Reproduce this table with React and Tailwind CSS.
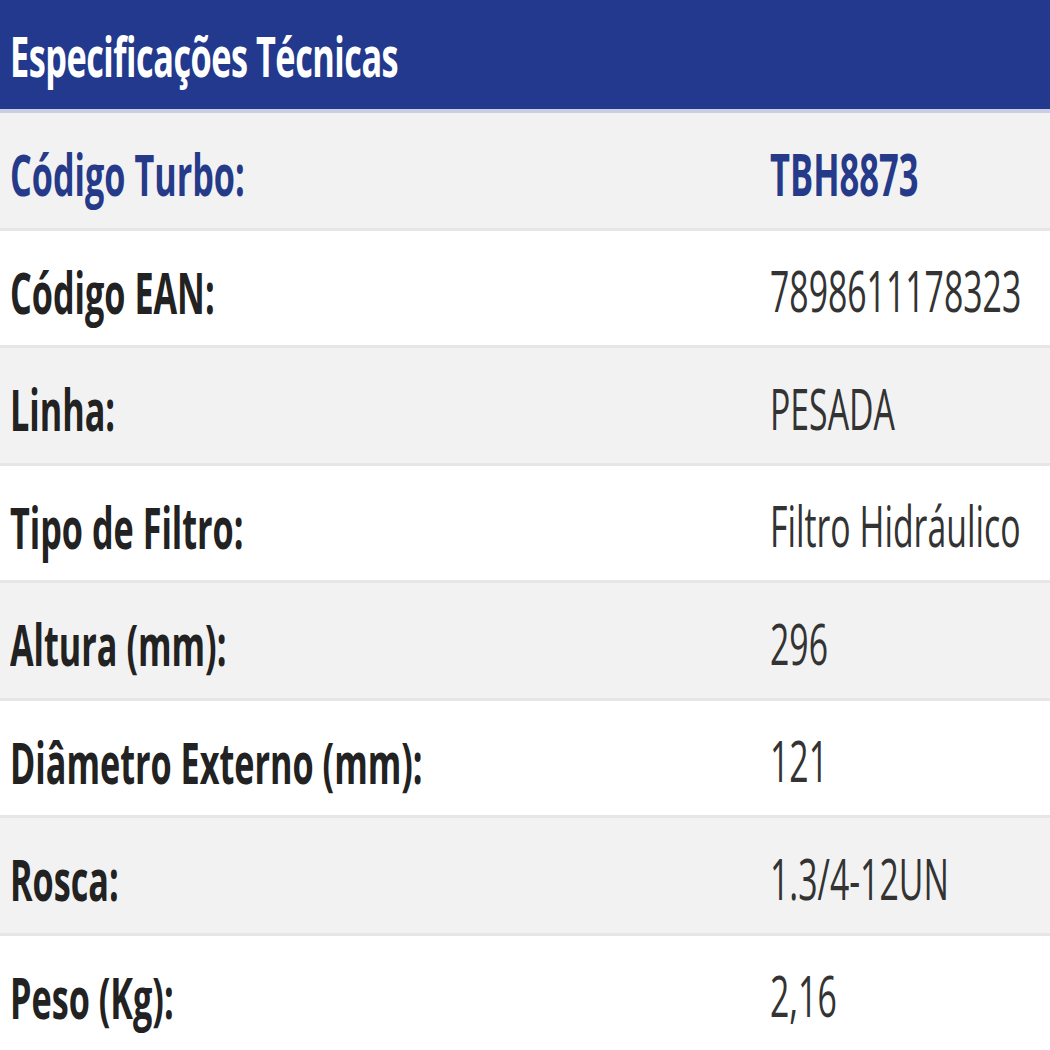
import React from "react";

const rows = [
  ["Código Turbo:", "TBH8873", true],
  ["Código EAN:", "7898611178323"],
  ["Linha:", "PESADA"],
  ["Tipo de Filtro:", "Filtro Hidráulico"],
  ["Altura (mm):", "296"],
  ["Diâmetro Externo (mm):", "121"],
  ["Rosca:", "1.3/4-12UN"],
  ["Peso (Kg):", "2,16"],
];

export default function App() {
  return (
    <div className="w-[1050px] h-[1050px] overflow-hidden bg-white" style={{ fontFamily: '"Open Sans", "Noto Sans", sans-serif' }}>
      <div className="h-[113px] bg-[#22398d] border-b-[4px] border-[#c9cfe2] flex items-center pl-[10px] pt-[4px]">
        <span className="inline-block text-white font-bold text-[34.3px] tracking-[-0.5px] scale-y-[1.62] leading-none">
          Especificações Técnicas
        </span>
      </div>
      {rows.map(([label, value, blue], i) => (
        <div
          key={i}
          className={`h-[117.5px] flex items-center pt-[10px] border-b-[3px] border-[#e6e6e6] ${i % 2 === 0 ? "bg-[#f2f2f2]" : "bg-white"}`}
        >
          <div className="w-[770px] pl-[10px]">
            <span className={`inline-block font-bold text-[34.2px] leading-none scale-y-[1.7] ${blue ? "text-[#263a8a]" : "text-[#222222]"}`}>
              {label}
            </span>
          </div>
          <div className="flex-1">
            <span className={`inline-block text-[33.8px] leading-none scale-y-[1.7] ${blue ? "font-bold text-[#263a8a] text-[34.5px]" : "text-[#333333]"}`}>
              {value}
            </span>
          </div>
        </div>
      ))}
    </div>
  );
}
